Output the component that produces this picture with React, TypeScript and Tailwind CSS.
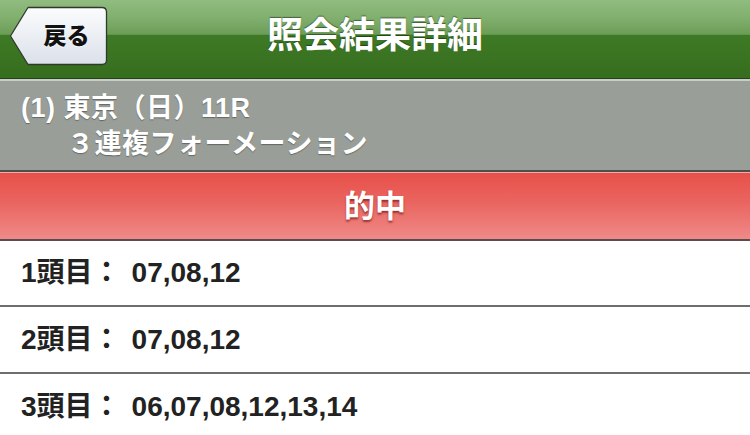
import React from "react";

const FONT = "font-['Liberation_Sans','Noto_Sans_CJK_JP',sans-serif]";

function BackButton() {
  return (
    <button className="relative w-[99px] h-[60px] ml-[9px] mt-[6px] flex items-center justify-center pl-[16px]">
      <svg className="absolute inset-0" width="99" height="60" viewBox="0 0 99 60">
        <defs>
          <linearGradient id="bb" x1="0" y1="0" x2="0" y2="1">
            <stop offset="0" stopColor="#fbfcfd" />
            <stop offset="1" stopColor="#dbe1ea" />
          </linearGradient>
        </defs>
        <path
          d="M19 1.5 H93 Q97.5 1.5 97.5 6 V54 Q97.5 58.5 93 58.5 H19 L1.5 30 Z"
          fill="url(#bb)"
          stroke="#2f3a2c"
          strokeWidth="1.3"
          strokeLinejoin="round"
        />
      </svg>
      <span className="relative text-[23px] font-black text-[#111] leading-none [text-shadow:0_1px_0_rgba(255,255,255,0.8)]">
        戻る
      </span>
    </button>
  );
}

function Row({ label, values }: { label: string; values: string }) {
  return (
    <div className="flex items-center pl-[21px] text-[28px] font-bold text-[#222] leading-none">
      <span>{label}</span>
      <span>：</span>
      <span className="ml-[11px]">{values}</span>
    </div>
  );
}

export default function App() {
  return (
    <div className={`w-[750px] h-[435px] overflow-hidden bg-white ${FONT}`}>
      {/* Header */}
      <div className="h-[78px] grid grid-cols-[1fr_auto_1fr] bg-[linear-gradient(to_bottom,#90bc80_0%,#7fae6c_25%,#6c9d57_44%,#3e7a25_45%,#366d1e_100%)]">
        <div className="flex items-start">
          <BackButton />
        </div>
        <div className="flex items-center justify-center pb-[6px] text-white font-bold text-[36px] leading-none [text-shadow:0_-1px_1px_rgba(0,0,0,0.45)]">
          照会結果詳細
        </div>
        <div />
      </div>
      <div className="h-[1px] bg-[#27431a]" />
      <div className="h-[2px] bg-[#c9cdc8]" />

      {/* Race info */}
      <div className="h-[89px] bg-[#999e98] pt-[9px] text-white font-bold text-[27px] leading-[36px] [text-shadow:0_1px_1px_rgba(0,0,0,0.35)]">
        <div className="pl-[21px] tracking-[0.5px]">(1) 東京（日）11R</div>
        <div className="pl-[67px] tracking-[0.5px]">３連複フォーメーション</div>
      </div>
      <div className="h-[2px] bg-[#4d4f4d]" />
      <div className="h-[1px] bg-[#f4aaa6]" />

      {/* Hit bar */}
      <div className="h-[66px] flex items-center justify-center bg-[linear-gradient(to_bottom,#e8504a_0%,#ea6560_45%,#ef8a88_100%)] text-white font-bold text-[31px] leading-none [text-shadow:0_2px_2px_rgba(90,0,0,0.55)]">
        的中
      </div>
      <div className="h-[2px] bg-[#5e4a4a]" />

      {/* Rows */}
      <div className="h-[64px] flex items-center">
        <Row label="1頭目" values="07,08,12" />
      </div>
      <div className="h-[2px] bg-[#6e6e6e]" />
      <div className="h-[65px] flex items-center">
        <Row label="2頭目" values="07,08,12" />
      </div>
      <div className="h-[2px] bg-[#6e6e6e]" />
      <div className="h-[65px] flex items-center">
        <Row label="3頭目" values="06,07,08,12,13,14" />
      </div>
    </div>
  );
}
